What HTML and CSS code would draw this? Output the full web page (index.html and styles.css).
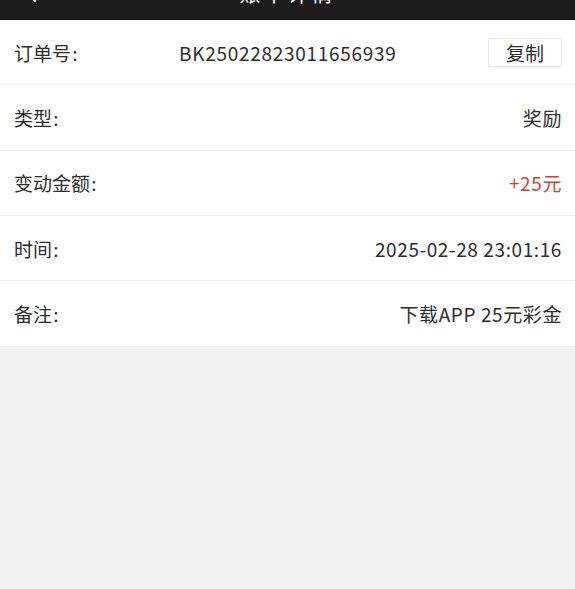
FILE: index.html
```html
<html>
<head>
<meta charset="utf-8">
<meta name="viewport" content="width=device-width, initial-scale=1.0">
<link rel="stylesheet" href="styles.css">
</head>
<body>
<div class="top">
<span class="back">
<svg width="14" height="22" viewBox="0 0 14 22"><path d="M11 2 L3 11 L11 20" fill="none" stroke="#fff" stroke-width="2.4" stroke-linecap="round" stroke-linejoin="round"/></svg>
</span>
<span class="title">账单详情</span>
</div>

<div class="list">
<div class="row">
<span class="lab">订单号 :</span>
<span class="num">BK25022823011656939</span>
<button class="copy">复制</button>
</div>
<div class="row">
<span class="lab">类型 :</span>
<span class="val">奖励</span>
</div>
<div class="row">
<span class="lab">变动金额 :</span>
<span class="val red">+25元</span>
</div>
<div class="row">
<span class="lab">时间 :</span>
<span class="val">2025-02-28 23:01:16</span>
</div>
<div class="row">
<span class="lab">备注 :</span>
<span class="val">下载APP 25元彩金</span>
</div>
</div>
</body>
</html>
```

FILE: styles.css
```css
*{
margin:0;
padding:0;
box-sizing:border-box;
}
body{
background:#f2f2f2;
font-family:"Noto Sans CJK SC","Noto Sans",sans-serif;
color:#2e2e2e;
overflow:hidden;
}
.top{
height:48px;
margin-top:-28px;
padding-bottom:7px;
background:#1c1c1c;
border-bottom:1px solid #0e0e0e;
display:flex;
align-items:center;
justify-content:center;
position:relative;
color:#fff;
}
.back{
position:absolute;
left:24px;
top:9px;
}
.title{
font-size:21px;
letter-spacing:3px;
}
.list{
background:#fff;
}
.row{
height:65.3px;
display:flex;
align-items:center;
padding:0 13px 0 14px;
border-bottom:1px solid #efefef;
font-size:19px;
}
.row:last-child{
border-bottom:none;
}
.lab{
flex:none;
word-spacing:-3px;
}
.val{
margin-left:auto;
letter-spacing:0.6px;
}
.num{
flex:1;
text-align:center;
padding-left:10px;
letter-spacing:0.7px;
}
.red{
color:#c4493d;
}
.copy{
width:74px;
height:29px;
background:#fff;
border:1px solid #e6e6e6;
border-radius:2px;
font-family:inherit;
font-size:19px;
color:#2e2e2e;
line-height:1;
}
```
